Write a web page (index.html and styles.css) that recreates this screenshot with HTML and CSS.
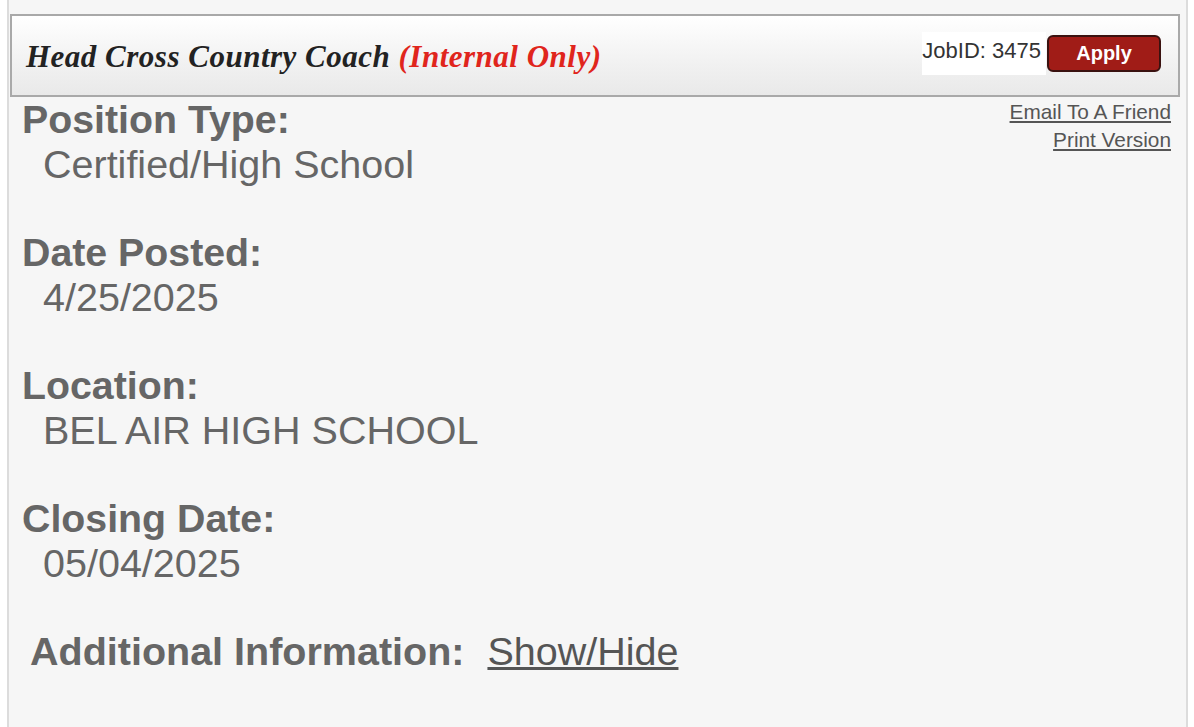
FILE: index.html
```html
<!DOCTYPE html>
<html lang="en">
<head>
  <meta charset="UTF-8" />
  <title>Head Cross Country Coach</title>
  <link rel="stylesheet" href="styles.css">
</head>
<body>

<div class="page">
  <!-- Job header bar -->
  <div class="job-header">
    <span class="job-title">Head Cross Country Coach <span class="internal">(Internal Only)</span></span>
    <div class="job-actions">
      <span class="job-id">JobID: 3475</span>
      <button class="apply-btn">Apply</button>
    </div>
  </div>

  <div class="job-body">
    <div class="links">
      <a href="#">Email To A Friend</a>
      <a href="#">Print Version</a>
    </div>

    <div class="field">
      <div class="label">Position Type:</div>
      <div class="value">Certified/High School</div>
    </div>
    <div class="field">
      <div class="label">Date Posted:</div>
      <div class="value">4/25/2025</div>
    </div>
    <div class="field">
      <div class="label">Location:</div>
      <div class="value">BEL AIR HIGH SCHOOL</div>
    </div>
    <div class="field">
      <div class="label">Closing Date:</div>
      <div class="value">05/04/2025</div>
    </div>

    <div class="additional">
      <span class="label">Additional Information:</span>
      <a href="#" class="toggle">Show/Hide</a>
    </div>
  </div>
</div>

</body>
</html>
```

FILE: styles.css
```css
* {
  box-sizing: border-box;
}
body {
  margin: 0;
  background: #fff;
  font-family: 'Liberation Sans', Arial, sans-serif;
}
.page {
  margin: 0 6px 0 7px;
  min-height: 727px;
  background: #f6f6f6;
  border-left: 2px solid #dcdcdc;
  border-right: 2px solid #dcdcdc;
  padding-top: 14px;
}
.job-header {
  margin: 0 6px 0 1px;
  height: 83px;
  border: 2px solid #a9a9a9;
  background: linear-gradient(#ffffff, #f1f1f1 60%, #e9e9e9);
  display: flex;
  align-items: center;
  justify-content: space-between;
  padding: 0 17px 0 14px;
}
.job-title {
  font-family: 'Liberation Serif', 'Times New Roman', serif;
  font-style: italic;
  font-weight: bold;
  font-size: 31px;
  letter-spacing: 0.5px;
  color: #222;
  margin-top: 2px;
}
.internal {
  color: #e0251c;
}
.job-actions {
  display: flex;
  align-items: center;
  margin-top: -4px;
}
.job-id {
  background: #fff;
  font-size: 22px;
  color: #333;
  padding: 6px 5px 11px 0;
}
.apply-btn {
  margin-left: 1px;
  width: 114px;
  height: 37px;
  background: #a01c17;
  color: #fff;
  font-family: 'Liberation Sans', Arial, sans-serif;
  font-weight: bold;
  font-size: 20px;
  border: 2px solid #3a1210;
  border-radius: 6px;
  cursor: pointer;
}
.job-body {
  padding: 0 15px 0 13px;
  position: relative;
}
.links {
  position: absolute;
  right: 15px;
  top: 1px;
  display: flex;
  flex-direction: column;
  align-items: flex-end;
  line-height: 28px;
}
.links a {
  color: #555;
  font-size: 20.8px;
}
.field {
  margin-bottom: 43px;
}
.label {
  font-weight: bold;
  font-size: 39.3px;
  color: #666;
  line-height: 45px;
}
.value {
  font-size: 39.5px;
  color: #666;
  padding-left: 21px;
  line-height: 45px;
}
.additional {
  padding-left: 8px;
  margin-top: 42px;
  font-size: 39.5px;
  color: #666;
}
.additional .label {
  font-size: 39.5px;
  margin-right: 12px;
}
.toggle {
  color: #555;
}
```
